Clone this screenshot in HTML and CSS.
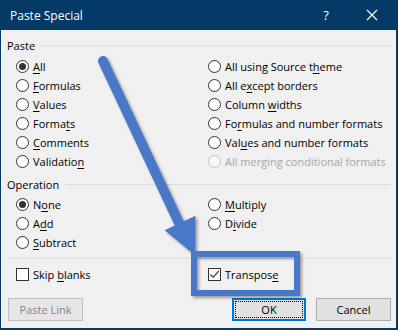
FILE: index.html
```html
<!DOCTYPE html>
<html>
<head>
<meta charset="utf-8">
<link rel="stylesheet" href="styles.css">
</head>
<body>
<div class="dialog">
  <div class="titlebar">
    <span class="title">Paste Special</span>
    <span class="help">?</span>
    <span class="close"><svg width="12" height="12" viewBox="0 0 12 12"><path d="M1 1 L11 11 M11 1 L1 11" stroke="#fff" stroke-width="1.2" fill="none"/></svg></span>
  </div>
  <div class="body">
    <div class="legend"><span>Paste</span><i class="rule"></i></div>
    <div class="grid six">
      <div class="opt"><span class="radio on"></span><span><u>A</u>ll</span></div>
      <div class="opt"><span class="radio"></span><span>All using Source t<u>h</u>eme</span></div>
      <div class="opt"><span class="radio"></span><span><u>F</u>ormulas</span></div>
      <div class="opt"><span class="radio"></span><span>All e<u>x</u>cept borders</span></div>
      <div class="opt"><span class="radio"></span><span><u>V</u>alues</span></div>
      <div class="opt"><span class="radio"></span><span>Column <u>w</u>idths</span></div>
      <div class="opt"><span class="radio"></span><span>Forma<u>t</u>s</span></div>
      <div class="opt"><span class="radio"></span><span>Fo<u>r</u>mulas and number formats</span></div>
      <div class="opt"><span class="radio"></span><span><u>C</u>omments</span></div>
      <div class="opt"><span class="radio"></span><span>Val<u>u</u>es and number formats</span></div>
      <div class="opt"><span class="radio"></span><span>Validatio<u>n</u></span></div>
      <div class="opt disabled"><span class="radio"></span><span>All merging conditional formats</span></div>
    </div>
    <div class="legend op"><span>Operation</span><i class="rule"></i></div>
    <div class="grid three">
      <div class="opt"><span class="radio on"></span><span>N<u>o</u>ne</span></div>
      <div class="opt"><span class="radio"></span><span><u>M</u>ultiply</span></div>
      <div class="opt"><span class="radio"></span><span>A<u>d</u>d</span></div>
      <div class="opt"><span class="radio"></span><span>D<u>i</u>vide</span></div>
      <div class="opt"><span class="radio"></span><span><u>S</u>ubtract</span></div>
      <div class="opt empty"></div>
    </div>
    <div class="sep"></div>
    <div class="grid checks">
      <div class="opt"><span class="check"></span><span>Skip <u>b</u>lanks</span></div>
      <div class="opt"><span class="check on"><svg width="11" height="11" viewBox="0 0 11 11"><path d="M1.5 5.5 L4.2 8.3 L9.8 1.8" stroke="#222" stroke-width="1.1" fill="none"/></svg></span><span>Transpos<u>e</u></span></div>
    </div>
    <div class="buttons">
      <button class="btn disabled">Paste Link</button>
      <span class="spacer"></span>
      <button class="btn default"><span class="focus">OK</span></button>
      <button class="btn">Cancel</button>
    </div>
  </div>
  <svg class="annot" width="398" height="330" viewBox="0 0 398 330">
    <g fill="none" stroke="#4a78c9">
      <line x1="103" y1="61" x2="180" y2="225" stroke-width="10" stroke-linecap="round"/>
      <rect x="194" y="254" width="103" height="39" stroke-width="6"/>
    </g>
    <polygon points="164.6,230.2 195.4,215.8 195.3,255.6" fill="#4a78c9"/>
  </svg>
</div>
</body>
</html>
```

FILE: styles.css
```css
* { box-sizing: border-box; }
html, body { margin: 0; padding: 0; background: #f0f0f0; }
body {
  font-family: "Open Sans", "Noto Sans", sans-serif;
  font-size: 11px;
  color: #000;
}
.dialog {
  position: relative;
  width: 398px;
  height: 330px;
  background: #f0f0f0;
  border-left: 1px solid #033a66;
  border-right: 2px solid #033a66;
  border-bottom: 2px solid #033a66;
  overflow: hidden;
}
.titlebar {
  height: 30px;
  background: #033a66;
  color: #fff;
  display: flex;
  align-items: center;
  padding-left: 9px;
}
.title { font-size: 12px; flex: 1; }
.help { width: 12px; font-size: 13px; margin-right: 34px; text-align: center; }
.close { width: 12px; height: 12px; display: flex; margin-right: 18px; }
.body { padding: 0 5px 0 6px; }
.legend {
  display: flex;
  align-items: center;
  height: 16px;
  margin-top: 7px;
}
.legend.op { margin-top: 5px; }
.rule {
  flex: 1;
  height: 1px;
  background: #dcdcdc;
  margin-left: 6px;
}
.grid {
  display: grid;
  grid-template-columns: 192px 1fr;
  padding-left: 9px;
  grid-auto-rows: 19px;
}
.grid.six { margin-top: 4px; }
.grid.three { margin-top: 3px; }
.opt {
  display: flex;
  align-items: center;
  gap: 4px;
  white-space: nowrap;
}
.radio {
  width: 13px;
  height: 13px;
  border: 1px solid #333;
  border-radius: 50%;
  background: #fff;
  display: flex;
  align-items: center;
  justify-content: center;
  flex: none;
}
.radio.on::after {
  content: "";
  width: 7px;
  height: 7px;
  border-radius: 50%;
  background: #333;
}
.opt.disabled { color: #a6a6a6; }
.opt.disabled .radio { border-color: #c4c4c4; background: #f7f7f7; }
.sep {
  height: 1px;
  background: #dcdcdc;
  margin-top: 6px;
}
.grid.checks { margin-top: 6px; grid-auto-rows: 18px; }
.check {
  width: 13px;
  height: 13px;
  border: 1px solid #333;
  background: #fff;
  display: flex;
  align-items: center;
  justify-content: center;
  flex: none;
}
.buttons {
  display: flex;
  margin-top: 15px;
  padding-left: 1px;
  gap: 10px;
}
.spacer { flex: 1; }
.btn {
  font-family: inherit;
  font-size: 11px;
  width: 75px;
  height: 23px;
  border: 1px solid #adadad;
  background: #e1e1e1;
  color: #000;
  padding: 0;
  display: flex;
  align-items: center;
  justify-content: center;
}
.btn.disabled { color: #838383; border-color: #bfbfbf; background: #e6e6e6; }
.btn.default {
  width: 74px;
  border: 2px solid #0078d7;
  padding: 1px;
}
.focus {
  width: 100%;
  height: 100%;
  border: 1px dotted #000;
  display: flex;
  align-items: center;
  justify-content: center;
}
u { text-decoration-thickness: 1px; text-underline-offset: 2px; }
.annot {
  position: absolute;
  left: -1px;
  top: 0;
  pointer-events: none;
  filter: drop-shadow(2px 2px 1.5px rgba(0,0,0,0.35));
}
```
